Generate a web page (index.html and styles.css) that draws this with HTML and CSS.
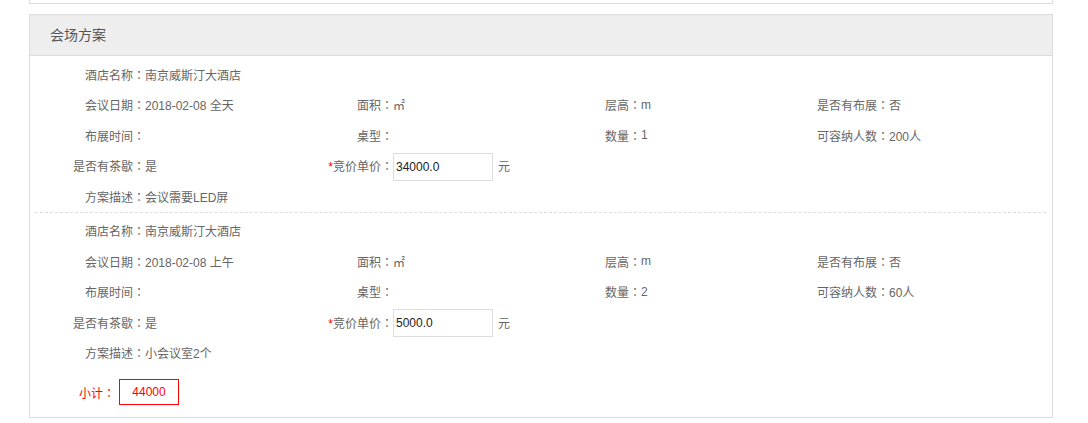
FILE: index.html
```html
<!DOCTYPE html>
<html lang="zh">
<head>
<meta charset="utf-8">
<title>会场方案</title>
<link rel="stylesheet" href="styles.css">
</head>
<body>
<div class="page">
  <div class="panel-top"></div>
  <div class="panel">
    <div class="panel-head">会场方案</div>
    <div class="panel-body">
      <div class="plan">
        <div class="row"><div class="field"><span class="lbl">酒店名称<span class="colon" lang="ja">：</span></span><span class="val">南京威斯汀大酒店</span></div></div>
        <div class="row grid4">
          <div class="field"><span class="lbl">会议日期<span class="colon" lang="ja">：</span></span><span class="val">2018-02-08 全天</span></div>
          <div class="field"><span class="lbl">面积<span class="colon" lang="ja">：</span></span><span class="val">㎡</span></div>
          <div class="field"><span class="lbl">层高<span class="colon" lang="ja">：</span></span><span class="val">m</span></div>
          <div class="field"><span class="lbl">是否有布展<span class="colon" lang="ja">：</span></span><span class="val">否</span></div>
        </div>
        <div class="row grid4">
          <div class="field"><span class="lbl">布展时间<span class="colon" lang="ja">：</span></span><span class="val"></span></div>
          <div class="field"><span class="lbl">桌型<span class="colon" lang="ja">：</span></span><span class="val"></span></div>
          <div class="field"><span class="lbl">数量<span class="colon" lang="ja">：</span></span><span class="val">1</span></div>
          <div class="field"><span class="lbl">可容纳人数<span class="colon" lang="ja">：</span></span><span class="val">200人</span></div>
        </div>
        <div class="row grid4">
          <div class="field"><span class="lbl">是否有茶歇<span class="colon" lang="ja">：</span></span><span class="val">是</span></div>
          <div class="field field-wide"><span class="lbl"><span class="req">*</span>竞价单价<span class="colon" lang="ja">：</span></span><input class="price" type="text" value="34000.0"><span class="unit">元</span></div>
        </div>
        <div class="row"><div class="field"><span class="lbl">方案描述<span class="colon" lang="ja">：</span></span><span class="val">会议需要LED屏</span></div></div>
      </div>
      <div class="plan">
        <div class="row"><div class="field"><span class="lbl">酒店名称<span class="colon" lang="ja">：</span></span><span class="val">南京威斯汀大酒店</span></div></div>
        <div class="row grid4">
          <div class="field"><span class="lbl">会议日期<span class="colon" lang="ja">：</span></span><span class="val">2018-02-08 上午</span></div>
          <div class="field"><span class="lbl">面积<span class="colon" lang="ja">：</span></span><span class="val">㎡</span></div>
          <div class="field"><span class="lbl">层高<span class="colon" lang="ja">：</span></span><span class="val">m</span></div>
          <div class="field"><span class="lbl">是否有布展<span class="colon" lang="ja">：</span></span><span class="val">否</span></div>
        </div>
        <div class="row grid4">
          <div class="field"><span class="lbl">布展时间<span class="colon" lang="ja">：</span></span><span class="val"></span></div>
          <div class="field"><span class="lbl">桌型<span class="colon" lang="ja">：</span></span><span class="val"></span></div>
          <div class="field"><span class="lbl">数量<span class="colon" lang="ja">：</span></span><span class="val">2</span></div>
          <div class="field"><span class="lbl">可容纳人数<span class="colon" lang="ja">：</span></span><span class="val">60人</span></div>
        </div>
        <div class="row grid4">
          <div class="field"><span class="lbl">是否有茶歇<span class="colon" lang="ja">：</span></span><span class="val">是</span></div>
          <div class="field field-wide"><span class="lbl"><span class="req">*</span>竞价单价<span class="colon" lang="ja">：</span></span><input class="price" type="text" value="5000.0"><span class="unit">元</span></div>
        </div>
        <div class="row"><div class="field"><span class="lbl">方案描述<span class="colon" lang="ja">：</span></span><span class="val">小会议室2个</span></div></div>
      </div>
      <div class="subtotal">
        <span class="sub-lbl">小计<span class="colon" lang="ja">：</span></span>
        <span class="sub-box">44000</span>
      </div>
    </div>
  </div>
</div>
</body>
</html>
```

FILE: styles.css
```css
html, body {
  margin: 0;
  padding: 0;
  background: #fff;
}
body {
  font-family: "Liberation Sans", "Noto Sans CJK SC", sans-serif;
  font-size: 12px;
  color: #666;
}
.page {
  width: 1024px;
  margin-left: 29px;
}
.panel-top {
  height: 3px;
  border: 1px solid #ddd;
  border-top: none;
  margin-bottom: 10px;
}
.panel {
  border: 1px solid #ddd;
}
.panel-head {
  height: 40px;
  line-height: 40px;
  background: #eee;
  border-bottom: 1px solid #ddd;
  padding-left: 20px;
  font-size: 14px;
  color: #555;
}
.panel-body {
  padding: 0 6px 12px 5px;
}
.plan {
  padding-top: 3px;
}
.plan + .plan {
  border-top: 1px dashed #ddd;
}
.row {
  height: 30.5px;
  display: flex;
  align-items: center;
}
.grid4 {
  display: grid;
  grid-template-columns: repeat(4, 248px);
  align-items: center;
}
.field {
  display: flex;
  align-items: center;
  white-space: nowrap;
}
.field-wide {
  grid-column: span 2;
}
.lbl {
  width: 110px;
  text-align: right;
  flex: none;
}
.colon {
  font-family: "Noto Sans CJK JP", "Noto Sans CJK TC", sans-serif;
}
.val {
  color: #666;
}
.req {
  color: #f00;
}
.price {
  box-sizing: border-box;
  width: 100px;
  height: 28px;
  margin: 2px 0 0 0;
  padding: 0 2px;
  border: 1px solid #ddd;
  font-family: "Liberation Sans", "Noto Sans CJK SC", sans-serif;
  font-size: 12px;
  color: #222;
  outline: none;
}
.unit {
  margin-left: 5px;
}
.subtotal {
  display: flex;
  align-items: center;
  margin-top: 11px;
}
.sub-lbl {
  width: 80px;
  text-align: right;
  color: #f00;
  margin-right: 4px;
}
.sub-box {
  box-sizing: border-box;
  width: 60px;
  height: 26px;
  line-height: 24px;
  border: 1px solid #f00;
  color: #f00;
  text-align: center;
}
```
